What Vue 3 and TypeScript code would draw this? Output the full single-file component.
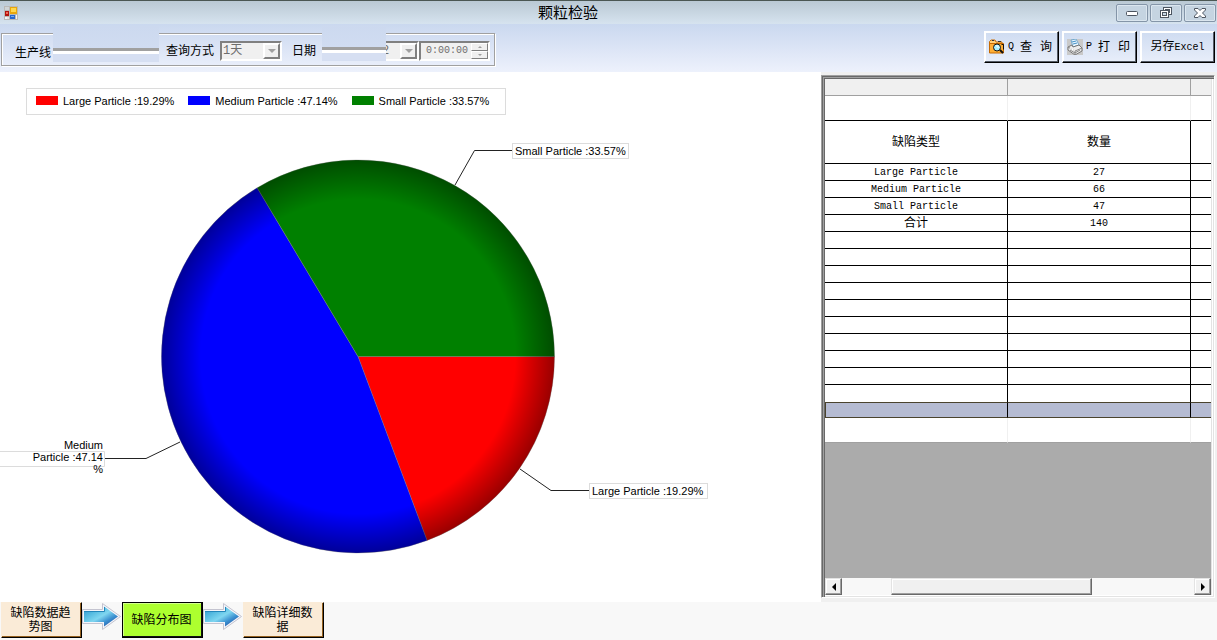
<script setup lang="ts">
import { ref } from 'vue'

interface Particle {
  name: string
  count: number
  color: string
}

const particles: Particle[] = [
  { name: 'Large Particle', count: 27, color: '#ff0000' },
  { name: 'Medium Particle', count: 66, color: '#0000ff' },
  { name: 'Small Particle', count: 47, color: '#008000' },
]
const shares = ['19.29%', '47.14%', '33.57%']
const total = particles.reduce((sum, p) => sum + p.count, 0)
const cx = 358
const cy = 241.5
const radius = 196.5

const caption = (i: number): string => `${particles[i].name} :${shares[i]}`

let turned = 0
const slices = particles.map((p) => {
  const from = (turned / total) * Math.PI * 2
  turned += p.count
  const to = (turned / total) * Math.PI * 2
  const at = (a: number) => `${(cx + radius * Math.cos(a)).toFixed(2)} ${(cy + radius * Math.sin(a)).toFixed(2)}`
  const large = to - from > Math.PI ? 1 : 0
  return { color: p.color, d: `M${cx} ${cy}L${at(from)}A${radius} ${radius} 0 ${large} 1 ${at(to)}Z` }
})

const steps = ['缺陷数据趋势图', '缺陷分布图', '缺陷详细数据']
const range = ref('1天')
const day = ref('2')
const time = ref('0:00:00')
const emptyRows = 10
</script>

<template>
  <div class="window">
    <header class="titlebar">
      <svg class="app-icon" width="14" height="14" viewBox="0 0 14 14" aria-hidden="true">
        <rect width="14" height="14" fill="#b9b9b7" />
        <rect x="1" y="1" width="4" height="3" fill="#cfd4d6" />
        <rect x="1" y="5" width="4" height="5" fill="#b3140c" />
        <rect x="2" y="6" width="2" height="2" fill="#ee6a56" />
        <rect x="6" y="1" width="7" height="7" fill="#e8a70c" />
        <rect x="7" y="2" width="5" height="4" fill="#ffd84e" />
        <rect x="6" y="9" width="5" height="4" fill="#2767ce" />
        <rect x="7" y="10" width="3" height="1" fill="#75acf0" />
        <rect x="1" y="11" width="2" height="2" fill="#f5f5f5" />
        <rect x="3" y="11" width="2" height="2" fill="#e4e4e4" />
        <rect x="12" y="9" width="1" height="4" fill="#f5f5f5" />
      </svg>
      <h1>颗粒检验</h1>
      <div class="window-buttons">
        <button type="button" aria-label="最小化">
          <svg width="12" height="12" viewBox="0 0 12 12"><rect x="0.500" y="4.500" width="11" height="4" rx="1" fill="#fff" stroke="#4c5560" /></svg>
        </button>
        <button type="button" aria-label="还原">
          <svg width="12" height="12" viewBox="0 0 12 12" fill="#fff" stroke="#4c5560">
            <rect x="3.500" y="0.500" width="8" height="7" />
            <rect x="5.500" y="2.500" width="4" height="3" fill="#c8d8e5" />
            <rect x="0.500" y="3.500" width="8" height="7" />
            <rect x="2.500" y="5.500" width="4" height="3" fill="#c8d8e5" />
          </svg>
        </button>
        <button type="button" aria-label="关闭">
          <svg width="12" height="12" viewBox="0 0 12 12"><path d="M.5 1.500h3.500l2 2 2-2h3.500v1.500L8.500 6l3 3v1.500H8l-2-2-2 2H.5V9l3-3-3-3z" fill="#fff" stroke="#4c5560" /></svg>
        </button>
      </div>
    </header>

    <div class="toolbar">
      <form class="query" @submit.prevent>
        <span class="line-label">生产线</span>
        <span class="line-slot"><span class="cover"></span></span>
        <label for="range" class="range-label">查询方式</label>
        <span class="combo">
          <select id="range" v-model="range" disabled>
            <option>1天</option>
          </select>
          <span class="drop"></span>
        </span>
        <label for="day" class="day-label">日期</label>
        <span class="day-slot">
          <input id="day" v-model="day" type="text" disabled />
          <span class="drop"></span>
          <span class="cover"></span>
        </span>
        <span class="time-slot">
          <input v-model="time" type="text" aria-label="时间" disabled />
          <span class="spin">
            <button type="button" aria-label="增加" disabled><i class="up"></i></button>
            <button type="button" aria-label="减少" disabled><i class="down"></i></button>
          </span>
        </span>
      </form>
      <div class="actions">
        <button type="button">
          <svg width="16" height="16" viewBox="0 0 16 16" aria-hidden="true">
            <path d="M0.500 14V2.500L2 1h4l1 2h6v2" fill="#ffd27c" stroke="#c76a00" />
            <path d="M0.500 4.500h14V14H.5z" fill="#ffae35" stroke="#c76a00" />
            <path d="M3 1.500h2M9 2.500h3" stroke="#333" />
            <circle cx="8" cy="8.500" r="3.500" fill="#a9f1ff" stroke="#111" />
            <path d="M7 7h2v2" stroke="#fff" fill="none" />
            <path d="M11 11l3 3" stroke="#111" stroke-width="2" fill="none" />
            <path d="M12.500 5.500h2v5" stroke="#111" fill="none" />
          </svg>
          <span class="key">Q</span><span>查</span><span>询</span>
        </button>
        <button type="button">
          <svg width="16" height="16" viewBox="0 0 16 16" aria-hidden="true">
            <rect width="16" height="16" fill="#c9c9c9" />
            <path d="M4 1l5-1 3 6-6 2z" fill="#eaf7ff" stroke="#73a9ce" />
            <path d="M5 3l4-1M6 5l4-1" stroke="#438fc5" />
            <path d="M1 8l4-2 1 2 6-2 3 3v3l-7 4-7-5z" fill="#ececec" stroke="#777" />
            <path d="M1 8l7 4 7-3M8 12v4M3 11l5 3 5-3" fill="none" stroke="#888" />
            <path d="M3 9l5 3" stroke="#fff" />
          </svg>
          <span class="key">P</span><span>打</span><span>印</span>
        </button>
        <button type="button" class="export"><span>另存<span class="key">Excel</span></span></button>
      </div>
    </div>

    <main class="content">
      <section class="chart">
        <ul class="legend">
          <li v-for="(p, i) in particles" :key="p.name">
            <svg width="22" height="9" aria-hidden="true"><rect width="22" height="9" :fill="p.color" /></svg>
            {{ caption(i) }}
          </li>
        </ul>
        <svg class="pie" viewBox="0 0 821 486" preserveAspectRatio="xMinYMin meet" role="img" aria-label="缺陷分布图">
          <defs>
            <radialGradient id="rim">
              <stop offset="0.800" stop-color="#000" stop-opacity="0" />
              <stop offset="1" stop-color="#000" stop-opacity="0.400" />
            </radialGradient>
          </defs>
          <path v-for="s in slices" :key="s.color" :d="s.d" :fill="s.color" stroke="#808080" stroke-opacity="0.600" stroke-width="0.600" />
          <circle :cx="cx" :cy="cy" :r="radius" fill="url(#rim)" />
          <g fill="none" stroke="#222">
            <path d="M455 70L474.500 35.500H513" />
            <path d="M520 354L551 375.500H590" />
            <path d="M180 327L146 343.500H105" />
          </g>
          <g fill="#fff" stroke="#dcdcdc">
            <rect x="512.500" y="28.500" width="116" height="15" />
            <rect x="589.500" y="368.500" width="118" height="15" />
            <path d="M0 336.500H104.500V351.500H0" />
          </g>
          <text x="515" y="40">{{ caption(2) }}</text>
          <text x="592" y="380">{{ caption(0) }}</text>
          <text text-anchor="end">
            <tspan x="103" y="334">Medium</tspan>
            <tspan x="103" y="346">Particle :47.14</tspan>
            <tspan x="103" y="358">%</tspan>
          </text>
        </svg>
      </section>

      <section class="panel">
        <div class="grid">
          <table>
            <colgroup>
              <col class="wide" />
              <col class="wide" />
              <col />
            </colgroup>
            <thead>
              <tr class="handles"><td></td><td></td><td></td></tr>
              <tr class="spacer"><td></td><td></td><td></td></tr>
              <tr class="heads"><th scope="col">缺陷类型</th><th scope="col">数量</th><td></td></tr>
            </thead>
            <tbody>
              <tr v-for="p in particles" :key="p.name">
                <td>{{ p.name }}</td><td>{{ p.count }}</td><td></td>
              </tr>
              <tr><td class="sum">合计</td><td>{{ total }}</td><td></td></tr>
              <tr v-for="n in emptyRows" :key="n" :class="{ last: n === emptyRows }"><td></td><td></td><td></td></tr>
              <tr class="selected"><td></td><td></td><td></td></tr>
              <tr class="tail"><td></td><td></td><td></td></tr>
            </tbody>
          </table>
          <div class="scrollbar">
            <button type="button" aria-label="向左滚动"><i class="left"></i></button>
            <div class="track"><div class="thumb"></div></div>
            <button type="button" aria-label="向右滚动"><i class="right"></i></button>
          </div>
        </div>
      </section>
    </main>

    <nav class="steps">
      <template v-for="(step, i) in steps" :key="step">
        <svg v-if="i > 0" width="40" height="29" viewBox="0 0 40 29" aria-hidden="true">
          <defs>
            <linearGradient id="arrow-fill" x1="0" y1="0" x2="1" y2="1">
              <stop offset="0" stop-color="#2b8fc8" />
              <stop offset="0.300" stop-color="#58bde2" />
              <stop offset="0.500" stop-color="#7fd6f0" />
              <stop offset="0.700" stop-color="#3a8fd0" />
              <stop offset="1" stop-color="#1f2f8c" />
            </linearGradient>
          </defs>
          <path d="M0.500 7.500H20.500V1.500L38.500 14.500 20.500 27.500V21.500H.5z" fill="#f5f5fa" stroke="#c4c4d0" />
          <path d="M2 9H22V4.500L36 14.500 22 24.500V20H2z" fill="url(#arrow-fill)" />
          <path d="M2 9.500H22.500V5" fill="none" stroke="#2386ba" />
        </svg>
        <button type="button" :class="{ current: i === 1 }">{{ step }}</button>
      </template>
    </nav>
  </div>
</template>

<style>
body {
  margin: 0;
}
</style>

<style scoped>
.window {
  box-sizing: border-box;
  display: flex;
  flex-direction: column;
  min-height: 100vh;
  background: #fff;
  color: #000;
  font: 12px/16px "Liberation Sans", "Noto Sans CJK SC", sans-serif;
}
.window *,
.window *::before {
  box-sizing: border-box;
}
button {
  padding: 0;
  font: inherit;
  color: inherit;
}
.titlebar {
  display: grid;
  grid-template-columns: 1fr auto 1fr;
  align-items: center;
  height: 24px;
  padding: 0 1px 0 4px;
  border-top: 1px solid #4b5753;
  background: linear-gradient(#bac9d4, #d6e3ef);
}
.titlebar h1 {
  margin: 0 84px 0 0;
  font-size: 15px;
  line-height: 20px;
  font-weight: 400;
}
.window-buttons {
  display: flex;
  justify-content: flex-end;
  gap: 2px;
}
.window-buttons button {
  display: flex;
  align-items: center;
  justify-content: center;
  width: 32px;
  height: 18px;
  border: 1px solid #8495a8;
  border-radius: 2px;
  background: #c5d4e1;
  box-shadow: inset 0 0 0 1px #dbe6ef;
}
.toolbar {
  display: flex;
  justify-content: space-between;
  align-items: flex-start;
  height: 48px;
  padding: 7px 2px 0 1px;
  background: linear-gradient(#cad8ef, #edf1fc);
}
.query {
  display: flex;
  align-items: center;
  height: 33px;
  margin-top: 2px;
  padding: 0 4px 0 13px;
  border: 1px solid #a0a0a0;
  box-shadow: inset 1px 1px 0 #fff, 1px 1px 0 #fff;
}
.line-label {
  padding-top: 6px;
}
.line-slot {
  position: relative;
  align-self: stretch;
  width: 106px;
  margin: 0 7px 0 2px;
}
.cover {
  position: absolute;
  top: -8px;
  left: 0;
  right: 0;
  height: 36px;
  background: linear-gradient(#ccd9ef, #d0dcf1 22px, #a0a0a0 22px 25px, #fff 25px 28px, #d6dff2 28px);
}
.range-label,
.day-label {
  padding-top: 2px;
}
.range-label {
  margin-right: 6px;
}
.day-label {
  margin: 0 6px 0 10px;
}
.combo,
.day-slot,
.time-slot {
  position: relative;
  display: flex;
  height: 20px;
  margin-top: 3px;
  border: 2px solid;
  border-color: #808080 #fff #fff #808080;
  background: #f0f0f0;
}
.combo {
  width: 62px;
}
.day-slot {
  width: 97px;
}
.day-slot .cover {
  top: -18px;
  left: -2px;
  right: 31px;
}
.time-slot {
  width: 71px;
}
select,
input {
  flex: 1;
  min-width: 0;
  width: 0;
  padding: 0 0 0 1px;
  border: 0;
  background: transparent;
  color: #6d6d6d;
  opacity: 1;
  appearance: none;
  font: 12px/16px "Liberation Mono", "Noto Sans CJK SC", monospace;
}
.day-slot input {
  padding-left: 58px;
}
.time-slot input {
  padding-left: 5px;
  font-size: 10px;
}
.drop {
  display: flex;
  align-items: center;
  justify-content: center;
  width: 17px;
  border: 2px solid;
  border-color: #fff #808080 #808080 #fff;
  background: #f0f0f0;
}
.drop::before {
  border: 4px solid transparent;
  border-top-color: #a0a0a0;
  border-bottom: 0;
  content: "";
}
.spin {
  display: flex;
  flex-direction: column;
  width: 17px;
}
.spin button {
  display: flex;
  align-items: center;
  justify-content: center;
  flex: 1;
  border: 1px solid;
  border-color: #fff #808080 #808080 #fff;
  background: #f0f0f0;
}
.up,
.down {
  border: 2px solid transparent;
}
.up {
  border-bottom-color: #a0a0a0;
  border-top: 0;
}
.down {
  border-top-color: #a0a0a0;
  border-bottom: 0;
}
.actions {
  display: flex;
  gap: 3px;
}
.actions button {
  display: flex;
  align-items: center;
  gap: 8px;
  width: 75px;
  height: 32px;
  padding-left: 4px;
  border: 1px solid;
  border-color: #fff #000 #000 #fff;
  background: linear-gradient(#cfdcf1, #e8eefa);
  box-shadow: inset -1px -1px 0 #555b66, inset 1px 1px 0 #fff;
}
.actions svg + .key {
  margin: 0 -2px 0 -5px;
}
.actions .export {
  justify-content: center;
  padding-left: 0;
}
.key {
  font-family: "Liberation Mono", monospace;
  font-size: 10px;
}
.content {
  flex: 1;
  display: grid;
  grid-template-columns: minmax(0, 821fr) minmax(0, 396fr);
}
.chart {
  display: flex;
  flex-direction: column;
  font-size: 11px;
}
.legend {
  display: flex;
  align-self: flex-start;
  align-items: center;
  gap: 14px;
  height: 27px;
  margin: 16px 0 0 26px;
  padding: 0 16px 2px 9px;
  border: 1px solid #dcdcdc;
  list-style: none;
}
.legend li {
  display: flex;
  align-items: center;
  gap: 5px;
  white-space: nowrap;
}
.pie {
  display: block;
  width: 100%;
}
.panel {
  display: flex;
  padding: 3px 2px 4px 0;
  background: #f0f0f0;
}
.grid {
  flex: 1;
  display: flex;
  flex-direction: column;
  min-width: 0;
  padding: 3px 3px 2px;
  border: 1px solid;
  border-color: #a0a0a0 #fff #fff #a0a0a0;
  background: #ababab;
  box-shadow: inset 1px 1px 0 #696969, inset 2px 2px 0 #a0a0a0, inset 3px 3px 0 #696969, inset -1px -1px 0 #e3e3e3, inset -2px -2px 0 #fff, inset -3px -3px 0 #e3e3e3;
}
table {
  width: 100%;
  table-layout: fixed;
  border-spacing: 0;
  background: #fff;
  font: 10px/14px "Liberation Mono", "Noto Sans CJK SC", monospace;
}
.wide {
  width: 47.400%;
}
td,
th {
  height: 17px;
  padding: 2px 0 0;
  border: solid #000;
  border-width: 0 1px 1px 0;
  text-align: center;
  font-weight: 400;
}
td:last-child {
  border-right: 0;
}
th,
.sum {
  font-size: 12px;
}
.handles td {
  border-color: #a0a0a0;
  background: #f0f0f0;
}
.spacer td {
  height: 25px;
  border-right-color: #f0f0f0;
}
.heads > * {
  height: 43px;
}
.last td {
  border-bottom: 0;
}
.selected td {
  height: 16px;
  border-top: 1px solid #4a432e;
  border-bottom-color: #4a432e;
  background: #b5bbd2;
}
.selected td:first-child {
  border-left: 1px solid #4a432e;
}
.tail td {
  height: 25px;
  border-right-color: #f0f0f0;
  border-bottom-color: #a0a0a0;
}
.scrollbar {
  display: flex;
  height: 17px;
  margin-top: auto;
}
.scrollbar button,
.thumb {
  border: 1px solid;
  border-color: #e3e3e3 #696969 #696969 #e3e3e3;
  background: #f0f0f0;
  box-shadow: inset -1px -1px 0 #a0a0a0, inset 1px 1px 0 #fff;
}
.scrollbar button {
  display: flex;
  align-items: center;
  justify-content: center;
  width: 17px;
}
.left,
.right {
  border: 4px solid transparent;
}
.left {
  border-right-color: #000;
  border-left: 0;
}
.right {
  border-left-color: #000;
  border-right: 0;
}
.track {
  flex: 1;
  background: #f8f8f8;
}
.thumb {
  width: 57%;
  height: 100%;
  margin-left: 14%;
}
.steps {
  display: flex;
  align-items: flex-start;
  height: 38px;
  padding-left: 1px;
  background: #f8f8f8;
}
.steps button {
  width: 81px;
  height: 36px;
  padding: 0 9px 0 7px;
  border: 1px solid;
  border-color: #faebd7 #000 #000 #faebd7;
  background: #faebd7;
  box-shadow: inset -1px -1px 0 #94611f;
  line-height: 14px;
}
.steps .current {
  border: 1px solid #000;
  background: #adff2f;
  box-shadow: inset -1px -1px 0 #111, inset 1px 1px 0 #d2ff8c;
}
</style>
